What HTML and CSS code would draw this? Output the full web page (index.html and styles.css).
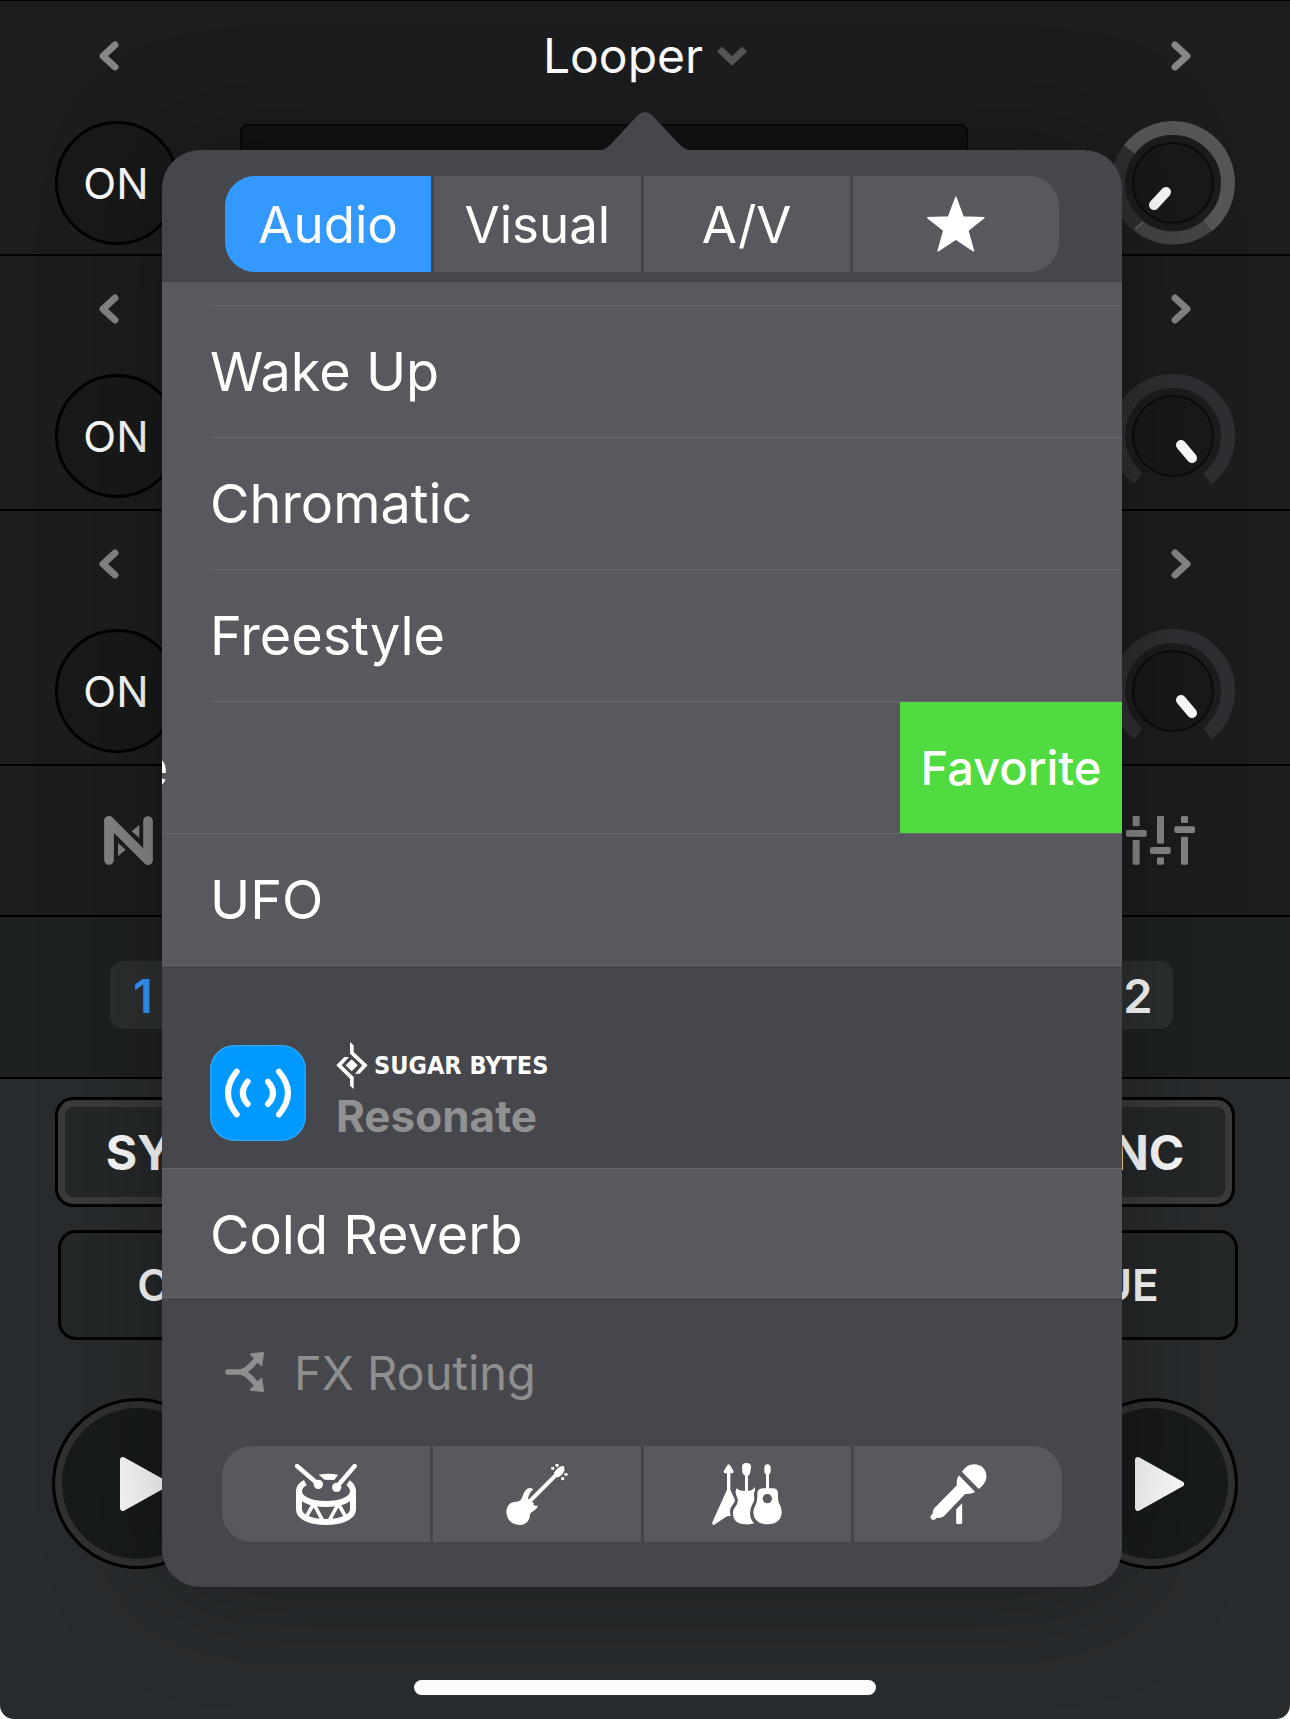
FILE: index.html
```html
<!DOCTYPE html>
<html lang="en">
<head>
    <meta charset="UTF-8">
    <meta name="viewport" content="width=device-width, initial-scale=1.0">
    <title>Looper</title>
    <link rel="stylesheet" href="styles.css">
</head>
<body>
    <!-- shared icons -->
    <svg class="defs" width="0" height="0" aria-hidden="true">
        <symbol id="arrow-left" viewBox="0 0 20 30">
            <path d="M16 4L4 15L16 26" fill="none" stroke="currentColor" stroke-width="7" stroke-linecap="round" stroke-linejoin="round"/>
        </symbol>
        <symbol id="arrow-right" viewBox="0 0 20 30">
            <path d="M4 4L16 15L4 26" fill="none" stroke="currentColor" stroke-width="7" stroke-linecap="round" stroke-linejoin="round"/>
        </symbol>
        <symbol id="play" viewBox="0 0 49 54">
            <path d="M3 3L46 27L3 51Z" fill="currentColor" stroke="currentColor" stroke-width="6" stroke-linejoin="round"/>
        </symbol>
        <symbol id="knob-low" viewBox="0 0 124 124">
            <path d="M27.4 104.7A55 55 0 1 1 96.6 104.7" fill="none" stroke="#2e2f32" stroke-width="14"/>
            <circle cx="62" cy="62" r="40" fill="#181a1a" stroke="#0b0d0d" stroke-width="2"/>
            <path d="M70 71L81 84" stroke="#fff" stroke-width="10" stroke-linecap="round"/>
        </symbol>
    </svg>

    <div class="app">
        <section class="fx">
            <div class="fx-head">
                <button class="nav" aria-label="Previous effect"><svg width="20" height="30"><use href="#arrow-left"/></svg></button>
                <button class="fx-title">
                    Looper
                    <svg width="30" height="20" viewBox="0 0 30 20"><path d="M2.500 3L15 15L27.500 3" fill="none" stroke="#565757" stroke-width="7"/></svg>
                </button>
                <button class="nav" aria-label="Next effect"><svg width="20" height="30"><use href="#arrow-right"/></svg></button>
            </div>
            <div class="fx-body">
                <button class="power">ON</button>
                <div class="display"></div>
                <svg class="knob" width="124" height="124" viewBox="0 0 124 124">
                    <circle cx="62" cy="62" r="46" fill="#1b1c1d"/>
                    <path d="M27.400 104.700A55 55 0 0 0 96.600 104.700" fill="none" stroke="#444645" stroke-width="13"/>
                    <path d="M27.400 104.700A55 55 0 0 1 18.400 28.400" fill="none" stroke="#2e2f31" stroke-width="14"/>
                    <path d="M18.400 28.400A55 55 0 1 1 96.600 104.700" fill="none" stroke="#555756" stroke-width="14"/>
                    <path d="M24 108L32 101" stroke="#5a5c5b" stroke-width="2"/>
                    <circle cx="62" cy="62" r="40" fill="#181a1a" stroke="#0b0d0d" stroke-width="2"/>
                    <path d="M55 71L43 84" stroke="#fff" stroke-width="10" stroke-linecap="round"/>
                </svg>
            </div>
        </section>

        <section class="fx">
            <div class="fx-head">
                <button class="nav" aria-label="Previous effect"><svg width="20" height="30"><use href="#arrow-left"/></svg></button>
                <button class="nav" aria-label="Next effect"><svg width="20" height="30"><use href="#arrow-right"/></svg></button>
            </div>
            <div class="fx-body">
                <button class="power">ON</button>
                <div class="display"></div>
                <svg class="knob" width="124" height="124"><use href="#knob-low"/></svg>
            </div>
        </section>

        <section class="fx">
            <div class="fx-head">
                <button class="nav" aria-label="Previous effect"><svg width="20" height="30"><use href="#arrow-left"/></svg></button>
                <button class="nav" aria-label="Next effect"><svg width="20" height="30"><use href="#arrow-right"/></svg></button>
            </div>
            <div class="fx-body">
                <button class="power">ON</button>
                <div class="display"></div>
                <svg class="knob" width="124" height="124"><use href="#knob-low"/></svg>
            </div>
        </section>

        <div class="tools">
            <button aria-label="Neural mix">
                <svg width="49" height="49" viewBox="0 0 147 147" fill="#868686">
                    <path d="M15 15V132M132 15V132" stroke="#868686" stroke-width="29" stroke-linecap="round"/>
                    <path d="M15 15L132 132" stroke="#868686" stroke-width="29" stroke-linecap="round"/>
                    <path d="M83 46L106 26V66Z"/>
                    <path d="M42 81L65 101L42 121Z"/>
                </svg>
            </button>
            <button aria-label="Mixer">
                <svg width="69" height="49" viewBox="0 0 207 147" fill="#868686">
                    <rect x="20" y="0" width="21" height="31" rx="4"/>
                    <rect x="0" y="42" width="62" height="20" rx="5"/>
                    <rect x="20" y="72" width="21" height="74" rx="4"/>
                    <rect x="93" y="0" width="21" height="83" rx="4"/>
                    <rect x="72" y="93" width="62" height="21" rx="5"/>
                    <rect x="93" y="124" width="21" height="22" rx="4"/>
                    <rect x="165" y="0" width="21" height="21" rx="4"/>
                    <rect x="145" y="31" width="62" height="20" rx="5"/>
                    <rect x="165" y="62" width="21" height="84" rx="4"/>
                </svg>
            </button>
        </div>

        <div class="decks">
            <button class="deck active">1</button>
            <button class="deck">2</button>
        </div>

        <div class="transport">
            <div class="side">
                <button class="sync">SYNC</button>
                <button class="cue">CUE</button>
                <button class="play" aria-label="Play deck 1"><svg width="49" height="54"><use href="#play"/></svg></button>
            </div>
            <div class="side right">
                <button class="sync">SYNC</button>
                <button class="cue">CUE</button>
                <button class="play" aria-label="Play deck 2"><svg width="49" height="54"><use href="#play"/></svg></button>
            </div>
        </div>
        <div class="home-bar"></div>

        <div class="popover">
            <svg class="popover-arrow" width="104" height="40" viewBox="0 0 104 40">
                <path d="M0 40C10 40 14 37 19 32L45 4Q52 -2 59 4L85 32C90 37 94 40 104 40Z" fill="#46474c"/>
            </svg>
            <div class="segments top">
                <button class="active">Audio</button>
                <button>Visual</button>
                <button>A/V</button>
                <button aria-label="Favorites">
                    <svg width="58" height="56" viewBox="202 585 173 166">
                        <path d="M288 588L310 647L372 649L324 687L341 748L288 713L235 748L252 687L204 649L266 647Z" fill="#fff" stroke="#fff" stroke-width="4" stroke-linejoin="round"/>
                    </svg>
                </button>
            </div>

            <div class="list">
                <ul>
                    <li class="cut"></li>
                    <li><button>Wake Up</button></li>
                    <li><button>Chromatic</button></li>
                    <li><button>Freestyle</button></li>
                    <li class="swiped"><span class="name">e</span><button class="favorite">Favorite</button></li>
                    <li class="last"><button>UFO</button></li>
                </ul>
                <div class="pack">
                    <svg width="96" height="96" viewBox="0 0 288 288">
                        <rect x="2" y="2" width="284" height="284" rx="72" fill="#0099ff" stroke="#2ea9ff" stroke-width="4"/>
                        <path d="M80 80Q28 144 80 208M207 80Q261 144 207 208" fill="none" stroke="#fff" stroke-width="18" stroke-linecap="round"/>
                        <path d="M113 110Q84 144 113 177M174 110Q204 144 174 177" fill="none" stroke="#fff" stroke-width="18" stroke-linecap="round"/>
                    </svg>
                    <div class="pack-text">
                        <div class="brand">
                            <svg width="32" height="47" viewBox="528 97 94 141" fill="#fff">
                                <path d="M569 97L580 107V127L622 167L598 192H584L606 167L569 132Z"/>
                                <path d="M580 238L569 228V207L528 167L552 142H566L544 167L580 202Z"/>
                                <path d="M574 149L592 167L574 185L556 167Z"/>
                            </svg>
                            <span>SUGAR BYTES</span>
                        </div>
                        <div class="pack-name">Resonate</div>
                    </div>
                </div>
                <ul class="second">
                    <li><button>Cold Reverb</button></li>
                </ul>
            </div>

            <div class="footer">
                <button class="routing">
                    <svg width="39" height="40" viewBox="45 66 117 120">
                        <path d="M54 126H94M92 126Q108 123 122 108L142 87M92 126Q108 129 122 144L142 165" fill="none" stroke="#8f8f8f" stroke-width="17" stroke-linecap="round"/>
                        <path d="M123 73L159 69L154 105ZM123 179L159 183L154 147Z" fill="#8f8f8f" stroke="#8f8f8f" stroke-width="6" stroke-linejoin="round"/>
                    </svg>
                    FX Routing
                </button>
                <div class="segments bottom">
                    <button aria-label="Drums">
                        <svg width="62" height="61" viewBox="255 399 186 183" fill="none" stroke="#fff">
                            <path d="M261 405L324 459M434 405L380 468" stroke-width="13" stroke-linecap="round"/>
                            <circle cx="325" cy="460" r="14" fill="#fff" stroke="none"/>
                            <circle cx="380" cy="469" r="14" fill="#fff" stroke="none"/>
                            <path d="M326 431Q355 426 384 431L373 447Q357 446 344 446Z" fill="#fff" stroke="none"/>
                            <path d="M286 455Q267 465 267 481C267 504 302 519 348 519C394 519 429 504 429 481Q429 465 414 455" stroke-width="18"/>
                            <path d="M267 478V535C267 558 302 573 348 573C394 573 429 558 429 535V478" stroke-width="18"/>
                            <path d="M309 522L286 562M313 522L339 570M383 522L357 570M387 522L410 562" stroke-width="11"/>
                        </svg>
                    </button>
                    <button aria-label="Guitar">
                        <svg width="62" height="61" viewBox="890 399 186 183" fill="#fff">
                            <path d="M960 512L1050 422" stroke="#fff" stroke-width="12"/>
                            <path d="M1034 425Q1037 418 1047 410Q1057 402 1064 406Q1068 416 1062 426Q1054 438 1042 439Q1033 435 1034 425Z"/>
                            <path d="M971 476Q960 483 956 503L974 517Q968 524 985 524Q986 532 967 543Q960 548 961 560Q953 582 930 582Q892 578 891 541Q894 512 922 512Q934 512 939 498Q947 471 962 471Q971 471 971 476Z"/>
                            <circle cx="1030" cy="412" r="5"/><circle cx="1043" cy="403" r="5"/>
                            <circle cx="1070" cy="430" r="5"/><circle cx="1060" cy="443" r="5"/>
                        </svg>
                    </button>
                    <button aria-label="Instruments">
                        <svg width="70" height="63" viewBox="213 98 210 189" fill="#fff">
                            <path d="M263 102Q266 102 271 111L278 124Q278 129 268 129V178L282 209Q283 213 276 222Q266 234 267 245L269 258Q262 255 254 260L219 284Q212 283 214 276L258 178V129Q247 129 248 123L257 108Q260 102 263 102Z"/>
                            <path d="M316 98Q332 98 330 112L327 129Q325 135 321 136V181Q330 184 342 170Q344 180 339 188Q338 193 340 204Q341 214 334 222Q327 235 327 250Q328 269 340 279Q330 283 313 282Q277 280 276 251Q275 237 285 226Q293 215 289 202Q279 183 288 173Q292 183 312 181V136Q306 134 304 126L303 110Q303 98 316 98Z"/>
                            <path fill-rule="evenodd" d="M379 102Q389 102 389 113V124Q388 131 384 132V174H395Q411 174 411 190V204Q411 216 417 225Q422 233 422 246Q421 281 379 282Q338 281 337 246Q337 233 344 223Q349 216 349 190Q349 175 365 174H375V132Q370 131 370 124V113Q370 102 379 102ZM379 191A14 14 0 1 0 379 219A14 14 0 1 0 379 191Z"/>
                        </svg>
                    </button>
                    <button aria-label="Vocals">
                        <svg width="57" height="60" viewBox="867 103 170 180" fill="#fff">
                            <path d="M962 126Q978 104 998 104Q1034 106 1036 142Q1034 162 1013 178Z"/>
                            <path d="M953 137L1002 187Q990 194 972 193L911 257Q903 266 886 265Q883 271 875 271Q864 266 870 257Q876 254 875 243Q879 234 886 229L947 167Q945 148 953 137Z"/>
                            <path d="M963 221V279Q963 283 959 283H949Q945 283 945 279V239Z"/>
                        </svg>
                    </button>
                </div>
            </div>
        </div>
    </div>
</body>
</html>
```

FILE: styles.css
```css
* {
    box-sizing: border-box;
}
body {
    margin: 0;
    background: #fff;
    font-family: Inter, "Liberation Sans", sans-serif;
    color: #fff;
}
button {
    margin: 0;
    padding: 0;
    border: 0;
    background: none;
    color: inherit;
    font: inherit;
    display: flex;
    align-items: center;
    justify-content: center;
}
svg {
    display: block;
    flex-shrink: 0;
}
.defs {
    position: absolute;
}
.app {
    position: relative;
    display: flex;
    flex-direction: column;
    min-height: 100vh;
    overflow: hidden;
    border-top: 1px solid #000;
    border-radius: 0 0 14px 14px;
    background: #292c2e;
}

/* effect slots */
.fx {
    height: 255px;
    background: #1c1d1f;
    border-bottom: 2px solid #000;
}
.fx-head {
    display: flex;
    align-items: center;
    justify-content: space-between;
    height: 112px;
    padding: 0 99px 2px;
}
.fx + .fx .fx-head {
    height: 110px;
    padding-bottom: 4px;
}
.nav {
    color: #868686;
}
.fx-title {
    gap: 14px;
    font-size: 48px;
    line-height: 60px;
}
.fx-body {
    display: flex;
    padding: 8px 55px 0;
}
.power {
    width: 124px;
    height: 124px;
    padding-right: 2px;
    border: 3px solid #000;
    border-radius: 50%;
    background: #181a1a;
    font-size: 43px;
}
.display {
    flex: 1;
    height: 118px;
    margin: 3px 143px 0 61px;
    border: 2px solid #080909;
    border-radius: 8px;
    background: #111313;
}

.tools {
    display: flex;
    align-items: center;
    justify-content: space-between;
    height: 151px;
    padding: 0 95px 0 104px;
    background: #1b1d1e;
    border-bottom: 2px solid #000;
}

.decks {
    display: flex;
    align-items: center;
    justify-content: space-between;
    height: 162px;
    padding: 0 117px 4px 110px;
    background: #1e2122;
    border-bottom: 2px solid #000;
}
.deck {
    width: 68px;
    height: 68px;
    padding-right: 2px;
    border-radius: 13px;
    background: #2d3030;
    font-size: 47px;
    font-weight: 600;
}
.deck.active {
    color: #3399ff;
}

/* transport */
.transport {
    display: flex;
    justify-content: space-between;
    padding: 18px 52px 0;
}
.side {
    display: flex;
    flex-direction: column;
    align-items: flex-start;
}
.side.right {
    align-items: flex-end;
}
.sync, .cue {
    height: 110px;
    border: 3px solid #000;
    border-radius: 18px;
    background: #252829;
}
.sync {
    width: 240px;
    margin: 0 3px;
    box-shadow: inset 0 0 0 7px #393b3d;
    font-size: 48px;
    font-weight: 700;
}
.cue {
    width: 250px;
    margin: 23px 0 0 6px;
    font-size: 44px;
    font-weight: 600;
}
.right .cue {
    margin-left: 0;
}
.play {
    width: 171px;
    height: 171px;
    margin-top: 58px;
    padding-left: 14px;
    border: 3px solid #000;
    border-radius: 50%;
    background: #181b1b;
    box-shadow: inset 0 0 0 7px #303232;
}
.home-bar {
    width: 462px;
    height: 15px;
    margin: auto auto 24px;
    border-radius: 8px;
    background: #fff;
}

/* popover */
.popover {
    position: absolute;
    top: 149px;
    left: 162px;
    right: 168px;
    border-radius: 38px;
    background: #46474c;
    box-shadow: 0 0 120px rgba(0, 0, 0, 0.3);
    color: #fff;
}
.popover-arrow {
    position: absolute;
    top: -39px;
    left: 431px;
}
.segments {
    display: grid;
    grid-template-columns: repeat(4, 1fr);
    gap: 3px;
}
.segments button {
    height: 96px;
    background: #58595e;
    font-size: 51px;
}
.segments button:first-child {
    border-radius: 30px 0 0 30px;
}
.segments button:last-child {
    border-radius: 0 30px 30px 0;
}
.segments .active {
    background: #3399ff;
}
.segments.top {
    padding: 26px 63px 10px;
}
.segments.bottom {
    padding: 0 60px 45px;
}

.list {
    height: 1015px;
    overflow: hidden;
}
.list ul {
    margin: 0;
    padding: 0;
    list-style: none;
    background: #58595e;
}
.list li {
    display: flex;
    height: 132px;
    margin-left: 48px;
    border-bottom: 1px solid #66676b;
    font-size: 54px;
}
.list li button {
    flex: 1;
    justify-content: flex-start;
}
.list li.cut {
    height: 24px;
}
.list li.swiped {
    align-items: center;
    margin-left: 0;
}
.swiped .name {
    flex: 1;
    margin-left: -25px;
}
.list .favorite {
    flex: none;
    align-self: stretch;
    justify-content: center;
    width: 222px;
    background: #50db41;
    font-size: 47px;
    font-weight: 500;
}
.list li.last {
    margin-left: 0;
    padding-left: 48px;
}
.list .second {
    border-top: 1px solid #66676b;
}

.pack {
    display: flex;
    align-items: center;
    gap: 30px;
    padding: 76px 48px 24px;
}
.brand {
    display: flex;
    align-items: center;
    gap: 6px;
    font-family: "Liberation Sans Narrow", "DejaVu Sans Condensed", sans-serif;
    font-size: 25px;
    font-weight: 700;
    line-height: 47px;
}
.pack-name {
    color: #919191;
    font-size: 44px;
    font-weight: 700;
    line-height: 55px;
}

.footer {
    border-top: 1px solid #66676b;
}
.routing {
    gap: 30px;
    height: 148px;
    margin-left: 63px;
    color: #8f8f8f;
    font-size: 47px;
}
```
